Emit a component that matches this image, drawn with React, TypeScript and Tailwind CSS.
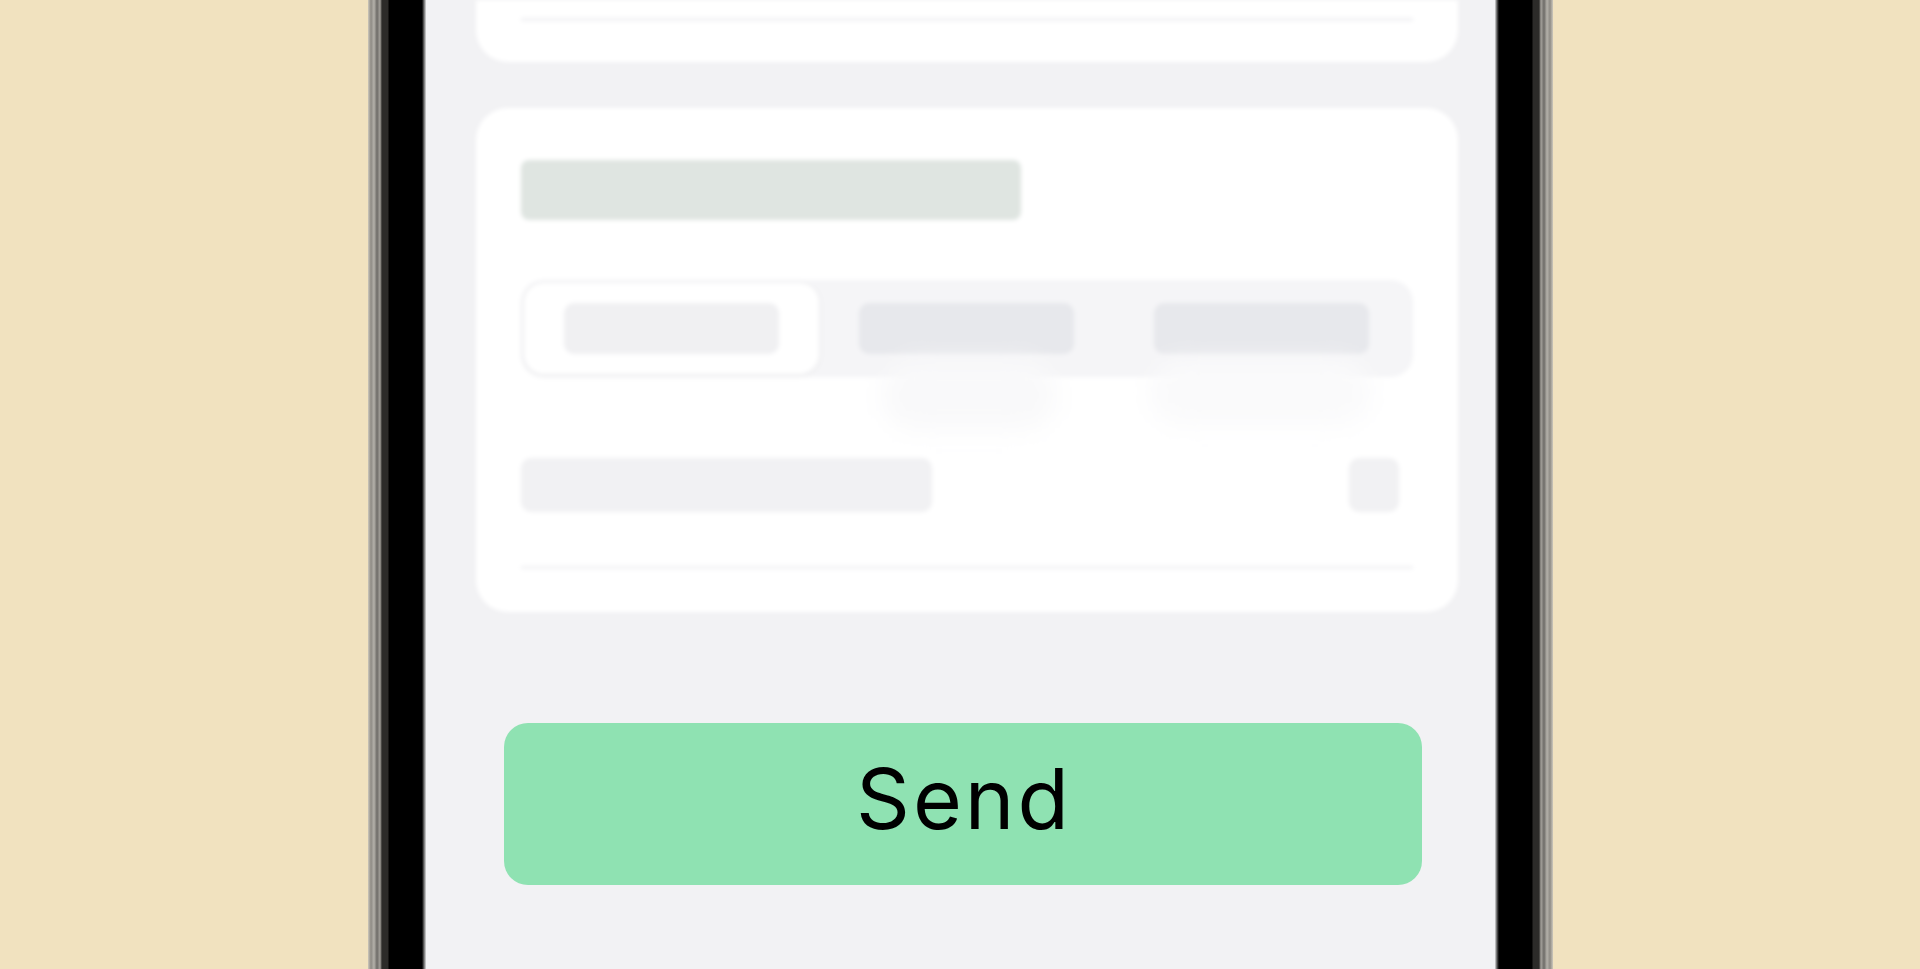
import React from "react";

function Bezel({ side }: { side: "left" | "right" }) {
  return side === "left" ? (
    <div className="w-[58px] shrink-0 bg-[linear-gradient(90deg,#cdc8bc_0px,#8e8b85_3px,#b4b1aa_6px,#6d6b67_9px,#a4a19b_12px,#2c2b29_14px,#2c2b29_20px,#000_21px,#000_54px,#6b6b6b_56px,#d9dadb_58px)]" />
  ) : (
    <div className="w-[58px] shrink-0 bg-[linear-gradient(270deg,#cdc8bc_0px,#8e8b85_3px,#b4b1aa_6px,#6d6b67_9px,#a4a19b_12px,#2c2b29_14px,#2c2b29_20px,#000_21px,#000_54px,#5a5a5a_56px,#d9dadb_58px)]" />
  );
}

function Tab({ active }: { active?: boolean }) {
  return (
    <div
      className={
        active
          ? "flex items-center justify-center rounded-[20px] bg-white shadow-[0_1px_6px_rgba(0,0,0,0.06)]"
          : "flex items-center justify-center"
      }
    >
      <div
        className={
          active
            ? "h-[51px] w-[215px] rounded-[10px] bg-[#f0f0f2]"
            : "h-[51px] w-[215px] rounded-[10px] bg-[#e7e8ec]"
        }
      />
    </div>
  );
}

export default function App() {
  return (
    <div className="flex h-[969px] w-full justify-center overflow-hidden bg-[#f1e2bf]">
      <div className="flex h-full w-[1185px]">
        <Bezel side="left" />
        <div className="relative flex flex-1 flex-col overflow-hidden bg-[#f2f2f4]">
          {/* loading placeholders */}
          <div className="ml-[50px] flex w-[982px] flex-col blur-[2px]">
            <div className="h-[62px] rounded-b-[32px] bg-white px-[45px] pt-[18px]">
              <div className="h-[3px] bg-[#f0f0f3]" />
            </div>

            <div className="relative mt-[46px] h-[504px] rounded-[32px] bg-white px-[45px] pt-[52px]">
              <div className="h-[60px] w-[500px] rounded-[8px] bg-[#dfe5e1]" />

              <div className="relative mt-[60px]">
                <div className="grid h-[97px] grid-cols-3 rounded-[22px] bg-[#f5f5f7] p-[3px]">
                  <Tab active />
                  <Tab />
                  <Tab />
                </div>
                <div className="pointer-events-none absolute left-[360px] top-[80px] h-[70px] w-[176px] rounded-full bg-[#f9f9fa] blur-md" />
                <div className="pointer-events-none absolute left-[628px] top-[80px] h-[65px] w-[222px] rounded-full bg-[#fafafb] blur-md" />
              </div>

              <div className="mt-[81px] flex items-center justify-between pr-[14px]">
                <div className="h-[54px] w-[411px] rounded-[10px] bg-[#f1f1f3]" />
                <div className="h-[54px] w-[50px] rounded-[10px] bg-[#f1f1f3]" />
              </div>

              <div className="mt-[54px] h-[3px] bg-[#f2f2f4]" />
            </div>
          </div>

          <button className="ml-[78px] mt-[111px] flex h-[162px] w-[918px] items-center justify-center rounded-[24px] bg-[#8fe2b2] pb-[10px] font-['Inter',sans-serif] text-[84px] font-normal tracking-[0.035em] text-black">
            <span className="pl-[0.035em]">Send</span>
          </button>
        </div>
        <Bezel side="right" />
      </div>
    </div>
  );
}
